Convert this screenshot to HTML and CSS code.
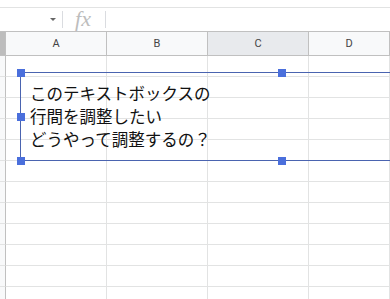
FILE: index.html
```html
<!DOCTYPE html>
<html lang="ja">
<head>
<meta charset="utf-8">
<link rel="stylesheet" href="styles.css">
</head>
<body>
<div class="app">
  <div class="topgap"></div>
  <div class="formula">
    <div class="namebox"><span class="caret"></span></div>
    <div class="sep"></div>
    <div class="fx">fx</div>
    <div class="sep"></div>
    <div class="input"></div>
  </div>
  <div class="sheet">
    <div class="grid">
      <div class="corner"></div>
      <div class="colh">A</div>
      <div class="colh">B</div>
      <div class="colh sel">C</div>
      <div class="colh">D</div>
      <div class="rowh"></div><div class="cell"></div><div class="cell"></div><div class="cell"></div><div class="cell"></div>
      <div class="rowh"></div><div class="cell"></div><div class="cell"></div><div class="cell"></div><div class="cell"></div>
      <div class="rowh"></div><div class="cell"></div><div class="cell"></div><div class="cell"></div><div class="cell"></div>
      <div class="rowh"></div><div class="cell"></div><div class="cell"></div><div class="cell"></div><div class="cell"></div>
      <div class="rowh"></div><div class="cell"></div><div class="cell"></div><div class="cell"></div><div class="cell"></div>
      <div class="rowh"></div><div class="cell"></div><div class="cell"></div><div class="cell"></div><div class="cell"></div>
      <div class="rowh"></div><div class="cell"></div><div class="cell"></div><div class="cell"></div><div class="cell"></div>
      <div class="rowh"></div><div class="cell"></div><div class="cell"></div><div class="cell"></div><div class="cell"></div>
      <div class="rowh"></div><div class="cell"></div><div class="cell"></div><div class="cell"></div><div class="cell"></div>
      <div class="rowh"></div><div class="cell"></div><div class="cell"></div><div class="cell"></div><div class="cell"></div>
      <div class="rowh"></div><div class="cell"></div><div class="cell"></div><div class="cell"></div><div class="cell"></div>
      <div class="rowh"></div><div class="cell"></div><div class="cell"></div><div class="cell"></div><div class="cell"></div>
    </div>
    <div class="textbox">
      <div class="tbtext">このテキストボックスの<br>行間を調整したい<br>どうやって調整するの？</div>
      <span class="h h-tl"></span>
      <span class="h h-tm"></span>
      <span class="h h-ml"></span>
      <span class="h h-bl"></span>
      <span class="h h-bm"></span>
    </div>
  </div>
</div>
</body>
</html>
```
FILE: styles.css
```css
html, body {
  margin: 0;
  padding: 0;
  background: #fff;
  overflow: hidden;
}
.app {
  width: 390px;
  height: 299px;
  overflow: hidden;
  font-family: Roboto, "Liberation Sans", "Noto Sans CJK JP", sans-serif;
}
.topgap {
  height: 7px;
  border-bottom: 1px solid #e2e3e3;
}
.formula {
  height: 23px;
  display: flex;
  align-items: center;
}
.namebox {
  width: 62px;
  height: 23px;
  position: relative;
}
.caret {
  position: absolute;
  left: 50px;
  top: 10px;
  width: 0;
  height: 0;
  border-left: 3px solid transparent;
  border-right: 3px solid transparent;
  border-top: 3px solid #666;
}
.sep {
  width: 1px;
  height: 17px;
  background: #dadce0;
}
.fx {
  width: 42px;
  text-align: center;
  font-family: "Liberation Serif", "DejaVu Serif", serif;
  font-style: italic;
  font-size: 22px;
  color: #bdbdbd;
  line-height: 23px;
  margin-top: -3px;
  padding-right: 2px;
  box-sizing: border-box;
}
.input {
  flex: 1;
}
.sheet {
  position: relative;
}
.grid {
  display: grid;
  grid-template-columns: 6px 101px 101px 101px 1fr;
  grid-auto-rows: 21px;
  grid-template-rows: 24px;
  border-top: 1px solid #c0c0c0;
}
.corner {
  background: #bdbdbd;
  border-right: 1px solid #c0c0c0;
  border-bottom: 1px solid #c0c0c0;
}
.colh {
  background: #f8f9fa;
  border-right: 1px solid #c0c0c0;
  border-bottom: 1px solid #c0c0c0;
  font-size: 11px;
  color: #444;
  display: flex;
  align-items: center;
  justify-content: center;
}
.colh.sel {
  background: #e8eaed;
}
.rowh {
  background: #f8f9fa;
  border-right: 1px solid #c0c0c0;
  border-bottom: 1px solid #e2e3e3;
}
.cell {
  border-right: 1px solid #e2e3e3;
  border-bottom: 1px solid #e2e3e3;
}
.textbox {
  position: absolute;
  left: 20px;
  top: 41px;
  width: 521px;
  height: 87px;
  border: 1px solid #4a64b0;
  background: transparent;
}
.tbtext {
  position: absolute;
  left: 9px;
  top: 9px;
  font-family: "Noto Sans CJK JP", sans-serif;
  font-size: 16.5px;
  line-height: 23px;
  color: #111;
  white-space: nowrap;
}
.h {
  position: absolute;
  width: 8px;
  height: 8px;
  background: #4a6fdc;
}
.h-tl { left: -4px; top: -4px; }
.h-tm { left: 257px; top: -4px; }
.h-ml { left: -4px; top: 40px; }
.h-bl { left: -4px; bottom: -5px; }
.h-bm { left: 257px; bottom: -5px; }
```
